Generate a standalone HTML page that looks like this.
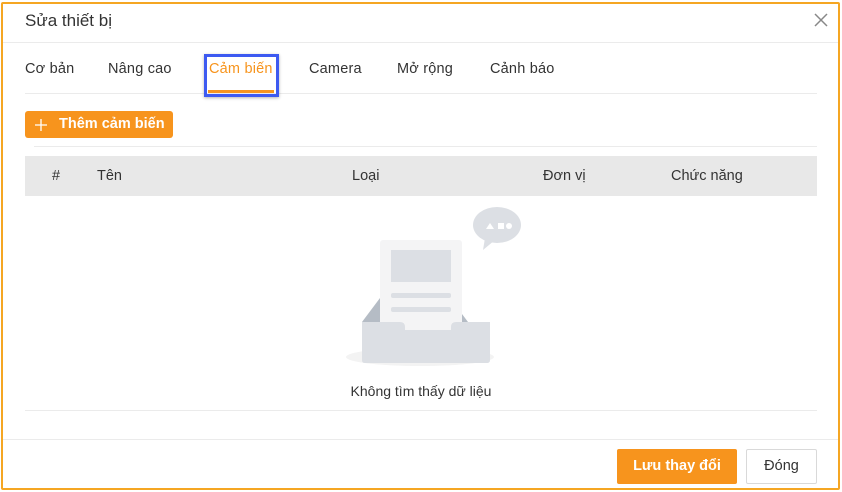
<!DOCTYPE html>
<html><head><meta charset="utf-8"><style>
*{margin:0;padding:0;box-sizing:border-box}
body{width:842px;height:492px;background:#fff;font-family:"Liberation Sans",Roboto,sans-serif;position:relative;overflow:hidden;color:#333}
.a{position:absolute}
.bd{position:absolute;left:1px;top:2px;width:839px;height:488px;border:2px solid #f5a623;border-radius:2px}
.t{font-size:14.5px;color:#333;top:61px;letter-spacing:0.2px}
</style></head><body>
<div class="bd"></div>
<div class="a" style="left:25px;top:11px;font-size:17px;color:#333">Sửa thiết bị</div>
<svg class="a" style="left:814px;top:13px" width="14" height="14"><path d="M1 1L13 13M13 1L1 13" stroke="#888" stroke-width="1.5"/></svg>
<div class="a" style="left:3px;top:42px;width:835px;height:1px;background:#ebebeb"></div>
<div class="a t" style="left:25px">Cơ bản</div>
<div class="a t" style="left:108px">Nâng cao</div>
<div class="a t" style="left:209px;color:#f7941d">Cảm biến</div>
<div class="a t" style="left:309px">Camera</div>
<div class="a t" style="left:397px">Mở rộng</div>
<div class="a t" style="left:490px">Cảnh báo</div>
<div class="a" style="left:25px;top:93px;width:792px;height:1px;background:#ebebeb"></div>
<div class="a" style="left:208px;top:90px;width:66px;height:3px;background:#f7941d"></div>
<div class="a" style="left:204px;top:54px;width:75px;height:43px;border:3px solid #3d5af1;box-shadow:0 1px 3px rgba(0,0,0,.3)"></div>
<div class="a" style="left:25px;top:111px;width:148px;height:27px;background:#f7941d;border-radius:3px;color:#fff;font-weight:bold;font-size:14.5px;line-height:27px;padding-left:34px">Thêm cảm biến</div>
<svg class="a" style="left:34px;top:118px" width="14" height="14"><path d="M7 1V13M1 7H13" stroke="#fff" stroke-width="1.3"/></svg>
<div class="a" style="left:34px;top:146px;width:783px;height:1px;background:#ebebeb"></div>
<div class="a" style="left:25px;top:156px;width:792px;height:40px;background:#e8e8e8;font-size:14.5px;line-height:40px">
<span class="a" style="left:27px">#</span><span class="a" style="left:72px">Tên</span><span class="a" style="left:327px">Loại</span><span class="a" style="left:518px">Đơn vị</span><span class="a" style="left:646px">Chức năng</span></div>
<svg class="a" style="left:340px;top:200px" width="190" height="175" viewBox="0 0 190 175">
<ellipse cx="80" cy="157" rx="74" ry="9" fill="#f3f3f3"/>
<path d="M22 122 L40 98 L40 122 Z M128 122 L110 98 L110 122 Z" fill="#b5bcc5"/>
<rect x="40" y="40" width="82" height="95" rx="3" fill="#f4f4f5"/>
<rect x="51" y="50" width="60" height="32" fill="#dcdfe4"/>
<rect x="51" y="93" width="60" height="5" rx="2" fill="#dcdfe4"/>
<rect x="51" y="107" width="60" height="5" rx="2" fill="#dcdfe4"/>
<path d="M22 122 H60 Q65 122 65 127 V130 H111 V127 Q111 122 116 122 H150 V160 Q150 163 147 163 H25 Q22 163 22 160 Z" fill="#dcdfe4"/>
<ellipse cx="157" cy="25" rx="24" ry="18" fill="#dcdfe4"/>
<path d="M145 38 L143 50 L155 40 Z" fill="#dcdfe4"/>
<path d="M146 29 L150 23 L154 29 Z" fill="#fff"/><rect x="158" y="23" width="6" height="6" fill="#fff"/><circle cx="169" cy="26" r="3" fill="#fff"/>
</svg>
<div class="a" style="left:0;width:842px;top:383px;text-align:center;font-size:14px;color:#333">Không tìm thấy dữ liệu</div>
<div class="a" style="left:25px;top:410px;width:792px;height:1px;background:#ebebeb"></div>
<div class="a" style="left:3px;top:439px;width:835px;height:1px;background:#ebebeb"></div>
<div class="a" style="left:617px;top:449px;width:120px;height:35px;background:#f7941d;border-radius:2px;color:#fff;font-weight:bold;font-size:14.5px;line-height:35px;text-align:center">Lưu thay đổi</div>
<div class="a" style="left:746px;top:449px;width:71px;height:35px;border:1px solid #d9d9d9;border-radius:2px;color:#333;font-size:14.5px;line-height:33px;text-align:center">Đóng</div>
</body></html>
